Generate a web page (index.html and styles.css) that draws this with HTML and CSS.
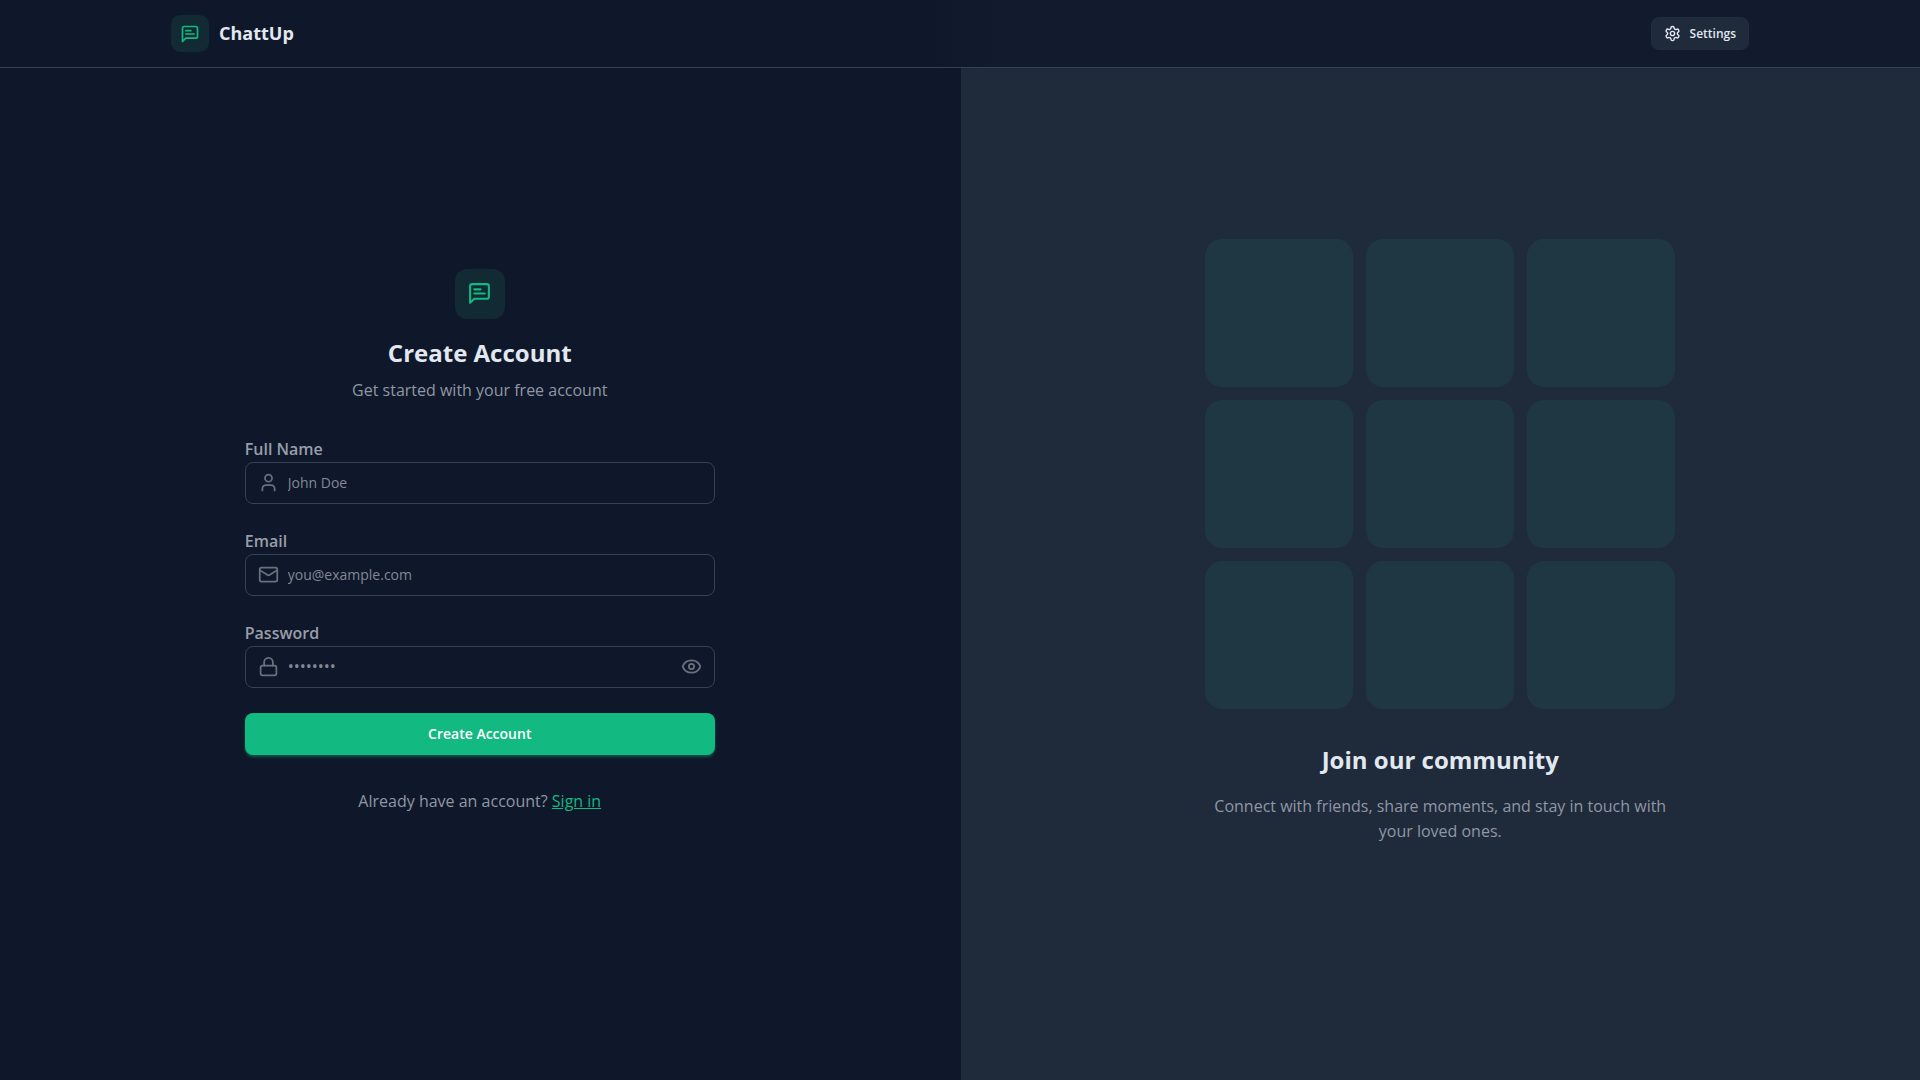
FILE: index.html
```html
<!DOCTYPE html>
<html lang="en">
<head>
<meta charset="utf-8">
<meta name="viewport" content="width=device-width, initial-scale=1">
<title>ChattUp</title>
<link rel="stylesheet" href="styles.css">
</head>
<body>
<header class="header">
  <div class="header-inner">
    <a class="brand" href="#">
      <span class="brand-icon">
        <svg class="icon icon-md" viewBox="0 0 24 24"><path d="M21 15a2 2 0 0 1-2 2H7l-4 4V5a2 2 0 0 1 2-2h14a2 2 0 0 1 2 2z"/><path d="M13 8H7"/><path d="M17 12H7"/></svg>
      </span>
      <span class="brand-name">ChattUp</span>
    </a>
    <button class="settings" type="button">
      <svg class="icon icon-sm" viewBox="0 0 24 24"><path d="M12.22 2h-.44a2 2 0 0 0-2 2v.18a2 2 0 0 1-1 1.73l-.43.25a2 2 0 0 1-2 0l-.15-.08a2 2 0 0 0-2.73.73l-.22.38a2 2 0 0 0 .73 2.73l.15.1a2 2 0 0 1 1 1.72v.51a2 2 0 0 1-1 1.74l-.15.09a2 2 0 0 0-.73 2.73l.22.38a2 2 0 0 0 2.73.73l.15-.08a2 2 0 0 1 2 0l.43.25a2 2 0 0 1 1 1.73V20a2 2 0 0 0 2 2h.44a2 2 0 0 0 2-2v-.18a2 2 0 0 1 1-1.73l.43-.25a2 2 0 0 1 2 0l.15.08a2 2 0 0 0 2.73-.73l.22-.39a2 2 0 0 0-.73-2.73l-.15-.08a2 2 0 0 1-1-1.74v-.5a2 2 0 0 1 1-1.74l.15-.09a2 2 0 0 0 .73-2.73l-.22-.38a2 2 0 0 0-2.73-.73l-.15.08a2 2 0 0 1-2 0l-.43-.25a2 2 0 0 1-1-1.73V4a2 2 0 0 0-2-2z"/><circle cx="12" cy="12" r="3"/></svg>
      Settings
    </button>
  </div>
</header>
<main class="main">
  <section class="panel">
    <div class="content">
      <div class="intro">
        <span class="intro-icon">
          <svg class="icon icon-lg" viewBox="0 0 24 24"><path d="M21 15a2 2 0 0 1-2 2H7l-4 4V5a2 2 0 0 1 2-2h14a2 2 0 0 1 2 2z"/><path d="M13 8H7"/><path d="M17 12H7"/></svg>
        </span>
        <h1 class="title">Create Account</h1>
        <p class="text">Get started with your free account</p>
      </div>
      <form class="form">
        <div class="field">
          <label class="label" for="name">Full Name</label>
          <div class="control">
            <svg class="icon icon-field" viewBox="0 0 24 24"><path d="M19 21v-2a4 4 0 0 0-4-4H9a4 4 0 0 0-4 4v2"/><circle cx="12" cy="7" r="4"/></svg>
            <input class="input" id="name" type="text" placeholder="John Doe">
          </div>
        </div>
        <div class="field">
          <label class="label" for="email">Email</label>
          <div class="control">
            <svg class="icon icon-field" viewBox="0 0 24 24"><rect width="20" height="16" x="2" y="4" rx="2"/><path d="m22 7-8.97 5.7a1.94 1.94 0 0 1-2.06 0L2 7"/></svg>
            <input class="input" id="email" type="email" placeholder="you@example.com">
          </div>
        </div>
        <div class="field">
          <label class="label" for="password">Password</label>
          <div class="control">
            <svg class="icon icon-field" viewBox="0 0 24 24"><rect width="18" height="11" x="3" y="11" rx="2"/><path d="M7 11V7a5 5 0 0 1 10 0v4"/></svg>
            <input class="input input-password" id="password" type="password" placeholder="••••••••">
            <button class="reveal" type="button" aria-label="Show password">
              <svg class="icon icon-field" viewBox="0 0 24 24"><path d="M2.062 12.348a1 1 0 0 1 0-.696 10.75 10.75 0 0 1 19.876 0 1 1 0 0 1 0 .696 10.75 10.75 0 0 1-19.876 0"/><circle cx="12" cy="12" r="3"/></svg>
            </button>
          </div>
        </div>
        <button class="submit" type="submit">Create Account</button>
      </form>
      <p class="text signin">Already have an account? <a class="link" href="#">Sign in</a></p>
    </div>
  </section>
  <section class="panel panel-alt">
    <div class="content">
      <div class="tiles">
        <div class="tile"></div><div class="tile"></div><div class="tile"></div>
        <div class="tile"></div><div class="tile"></div><div class="tile"></div>
        <div class="tile"></div><div class="tile"></div><div class="tile"></div>
      </div>
      <h2 class="title community">Join our community</h2>
      <p class="text">Connect with friends, share moments, and stay in touch with your loved ones.</p>
    </div>
  </section>
</main>
</body>
</html>
```
FILE: styles.css
```css
:root {
  --base: #0f172a;
  --raised: #1f2a3b;
  --content: #e2e8f0;
  --muted: #9097a4;
  --primary: #12b981;
  --line: #374151;
}

* { box-sizing: border-box; margin: 0; }

body {
  min-height: 100vh;
  display: flex;
  flex-direction: column;
  background: var(--base);
  color: var(--content);
  font: 16px/25px "Segoe UI", "Open Sans", "Noto Sans", sans-serif;
}

button, input { font: inherit; color: inherit; }
button { cursor: pointer; }

.icon {
  flex: none;
  fill: none;
  stroke: currentColor;
  stroke-width: 2;
  stroke-linecap: round;
  stroke-linejoin: round;
}
.icon-sm { width: 17px; height: 17px; }
.icon-md { width: 20px; height: 20px; }
.icon-lg { width: 25px; height: 25px; }
.icon-field { width: 21px; height: 21px; color: #6a717e; }

.header {
  border-bottom: 1px solid var(--line);
  background: linear-gradient(90deg, #0f172a 48%, #121b2d 52%);
}
.header-inner {
  max-width: 1612px;
  height: 67px;
  margin: 0 auto;
  padding: 0 17px;
  display: flex;
  align-items: center;
  justify-content: space-between;
}
.brand {
  display: flex;
  align-items: center;
  gap: 10px;
  color: inherit;
  text-decoration: none;
}
.brand-icon, .intro-icon {
  display: grid;
  place-items: center;
  background: #112a33;
  color: var(--primary);
}
.brand-icon { width: 38px; height: 37px; border-radius: 9px; }
.brand-name { font-size: 18px; font-weight: 700; }
.settings {
  height: 33px;
  padding: 0 12px;
  display: flex;
  align-items: center;
  gap: 9px;
  border: 1px solid #212d3e;
  border-radius: 8px;
  background: var(--raised);
  font-size: 12px;
  font-weight: 600;
}

.main {
  flex: 1;
  display: grid;
  grid-template-columns: 1fr 1fr;
  gap: 1px;
}
.panel {
  display: flex;
  align-items: center;
  justify-content: center;
  padding: 0 24px 66px;
}
.panel-alt { background: var(--raised); }
.content {
  width: 100%;
  max-width: 470px;
  text-align: center;
}
.title { font-size: 24px; line-height: 34px; font-weight: 700; }
.text { color: var(--muted); }

.intro { display: flex; flex-direction: column; align-items: center; gap: 8px; }
.intro-icon { width: 50px; height: 50px; margin-bottom: 9px; border-radius: 12px; }

.form {
  margin: 34px 0;
  display: flex;
  flex-direction: column;
  gap: 25px;
}
.field { display: flex; flex-direction: column; text-align: left; }
.label { color: #989ea9; font-weight: 600; }
.control {
  height: 42px;
  padding: 0 12px;
  display: flex;
  align-items: center;
  gap: 9px;
  border: 1px solid var(--line);
  border-radius: 8px;
}
.input {
  flex: 1;
  min-width: 0;
  padding: 0;
  border: 0;
  outline: 0;
  background: none;
  font-size: 14px;
}
.input-password { font-size: 16px; }
.input::placeholder { color: #828995; opacity: 1; }
.reveal { display: flex; padding: 0; border: 0; background: none; }
.submit {
  height: 42px;
  border: 0;
  border-radius: 8px;
  background: var(--primary);
  box-shadow: 0 2px 3px #12b98166;
  color: #fff;
  font-size: 14px;
  font-weight: 600;
}
.link { color: var(--primary); }

.tiles {
  display: grid;
  grid-template-columns: repeat(3, 1fr);
  gap: 13px;
}
.tile { aspect-ratio: 1; border-radius: 17px; background: #1e3743; }
.community { margin: 34px 0 17px; }

@media (max-width: 1000px) {
  .main { grid-template-columns: 1fr; }
  .panel-alt { display: none; }
}
```
